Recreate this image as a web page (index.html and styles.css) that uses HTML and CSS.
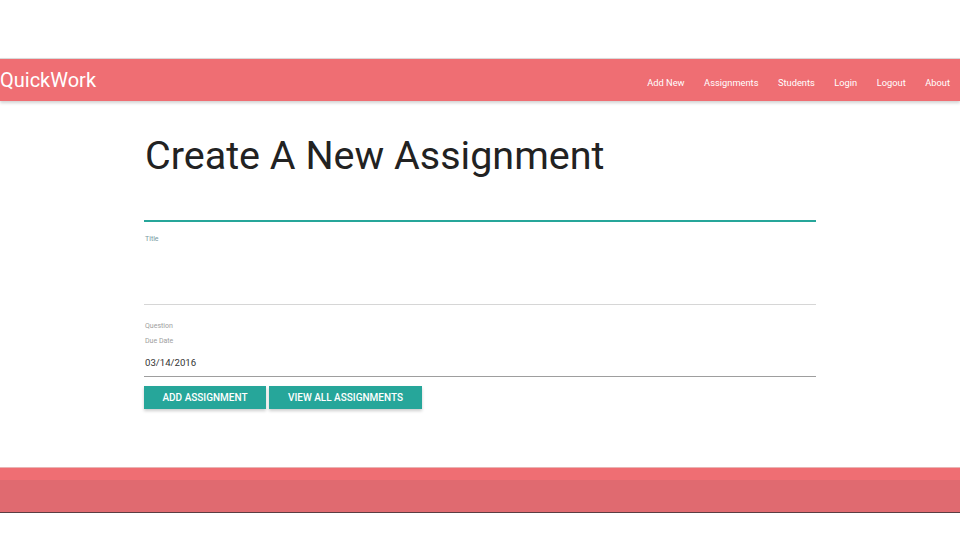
FILE: index.html
```html
<!DOCTYPE html>
<html>
<head>
<meta charset="utf-8">
<link rel="stylesheet" href="styles.css">
</head>
<body>
<div class="topgap"></div>
<nav class="navbar">
  <a class="brand" href="#">QuickWork</a>
  <ul class="links">
    <li><a href="#">Add New</a></li>
    <li><a href="#">Assignments</a></li>
    <li><a href="#">Students</a></li>
    <li><a href="#">Login</a></li>
    <li><a href="#">Logout</a></li>
    <li><a href="#">About</a></li>
  </ul>
</nav>
<main class="container">
  <h1 class="title">Create A New Assignment</h1>
  <div class="field field-title">
    <div class="line active"></div>
    <label class="lbl lbl-active">Title</label>
  </div>
  <div class="field field-question">
    <div class="line"></div>
    <label class="lbl">Question</label>
  </div>
  <div class="field field-date">
    <label class="lbl">Due Date</label>
    <div class="value">03/14/2016</div>
    <div class="line dark"></div>
  </div>
  <div class="actions">
    <button class="btn">Add Assignment</button>
    <button class="btn">View All Assignments</button>
  </div>
</main>
<footer class="footer">
  <div class="footer-top"></div>
  <div class="footer-main"></div>
</footer>
</body>
</html>
```
FILE: styles.css
```css
* { box-sizing: border-box; }
html, body { margin: 0; padding: 0; background: #fff; }
body { font-family: Roboto, "Noto Sans", sans-serif; color: #222; }

.topgap { height: 58px; }

.navbar {
  height: 43px;
  background: #ef6e73;
  border-top: 1px solid #d9d9d9;
  display: flex;
  align-items: center;
  justify-content: space-between;
  box-shadow: 0 2px 3px rgba(0,0,0,0.18);
  position: relative;
}
.brand {
  color: #fff;
  text-decoration: none;
  font-size: 20px;
  padding-left: 0;
  margin-top: -1px;
}
.links {
  list-style: none;
  margin: 0;
  padding: 0 10px 0 0;
  display: flex;
  gap: 19.5px;
}
.links a {
  color: #fff;
  text-decoration: none;
  font-size: 9.3px;
}

.container {
  width: 672px;
  margin: 0 auto;
  padding-top: 31px;
}
.title {
  font-weight: 400;
  font-size: 39.5px;
  margin: 0 0 0 1px;
  line-height: 48px;
  color: #222;
}

.field { position: relative; }
.field-title { margin-top: 40px; height: 84px; }
.field-question { height: 32px; }
.line { height: 1px; background: #d6d6d6; }
.line.active { height: 2px; background: #26a69a; }
.line.dark { background: #9e9e9e; }
.lbl {
  display: block;
  font-size: 7px;
  color: #9e9e9e;
  padding-left: 1px;
}
.lbl-active { color: #7a9aa2; margin-top: 13px; }
.field-question .lbl { margin-top: 17px; }
.field-date .lbl { margin-top: 1px; }
.value {
  font-size: 9.6px;
  color: #333;
  padding: 12px 0 8px 1px;
}

.actions {
  display: flex;
  gap: 3px;
  margin-top: 9px;
}
.btn {
  height: 23px;
  border: none;
  background: #26a69a;
  color: #fff;
  font-family: Roboto, sans-serif;
  font-weight: 500;
  font-size: 10px;
  text-transform: uppercase;
  padding: 0;
  box-shadow: 0 2px 3px rgba(0,0,0,0.2);
}
.btn:first-child { width: 122px; }
.btn:last-child { width: 153px; }

.footer { margin-top: 58px; border-bottom: 1px solid #5a3e42; }
.footer-top { height: 13px; background: #ef6e73; border-top: 1px solid #e9b4b4; }
.footer-main { height: 32px; background: #e06a70; }
```
